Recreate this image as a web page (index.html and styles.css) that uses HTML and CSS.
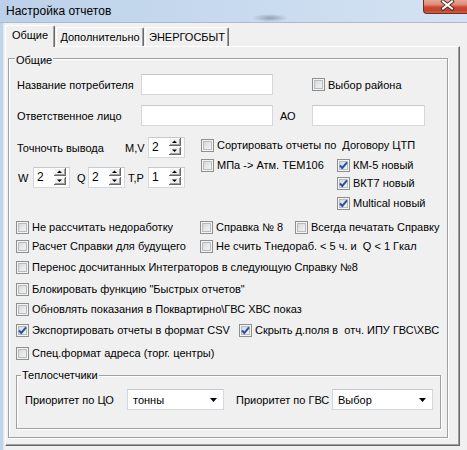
FILE: index.html
```html
<!DOCTYPE html>
<html lang="ru">
<head>
<meta charset="utf-8">
<title>Настройка отчетов</title>
<link rel="stylesheet" href="styles.css">
</head>
<body>
<div class="window">
  <div class="titlebar">
    <span class="title">Настройка отчетов</span>
    <div class="close">
      <svg width="44" height="14" viewBox="0 0 44 14">
        <path d="M20 1.5 L29 8.5 M29 1.5 L20 8.5" stroke="#4a2a24" stroke-width="3.8" stroke-linecap="square" fill="none"/>
        <path d="M20 1.5 L29 8.5 M29 1.5 L20 8.5" stroke="#ffffff" stroke-width="2" stroke-linecap="square" fill="none"/>
      </svg>
    </div>
  </div>
  <div class="frame-row">
    <div class="frame-left"></div>
    <div class="client">
      <div class="tabs">
        <div class="tab tab-active">Общие</div>
        <div class="tab tab-extra">Дополнительно</div>
        <div class="tab tab-energo">ЭНЕРГОСБЫТ</div>
      </div>
      <div class="page">
        <div class="group group-main">
          <span class="legend legend-main">Общие</span>

          <div class="row row-name">
            <span class="lbl lbl-field">Название потребителя</span>
            <span class="edit edit-name"></span>
            <span class="chk chk-district"><span class="cb"></span>Выбор района</span>
          </div>

          <div class="row row-resp">
            <span class="lbl lbl-field">Ответственное лицо</span>
            <span class="edit edit-name"></span>
            <span class="lbl lbl-ao">АО</span>
            <span class="edit edit-ao"></span>
          </div>

          <div class="precision">
            <div class="prec-left">
              <div class="prow">
                <span class="lbl lbl-prec">Точночть вывода</span>
                <span class="lbl lbl-mv">M,V</span>
                <span class="spin"><span class="spin-val">2</span><svg class="spin-btn" width="12" height="17" viewBox="0 0 12 17"><rect width="12" height="8" fill="#696969"/><rect width="11" height="7" fill="#ffffff"/><rect x="1" y="1" width="10" height="6" fill="#a0a0a0"/><rect x="1" y="1" width="9" height="5" fill="#f0f0f0"/><polygon points="3,5 8,5 5.5,2.5" fill="#000"/><rect y="9" width="12" height="8" fill="#696969"/><rect y="9" width="11" height="7" fill="#ffffff"/><rect x="1" y="10" width="10" height="6" fill="#a0a0a0"/><rect x="1" y="10" width="9" height="5" fill="#f0f0f0"/><polygon points="3,11.5 8,11.5 5.5,14" fill="#000"/></svg></span>
              </div>
              <div class="prow prow-2">
                <span class="lbl lbl-w">W</span>
                <span class="spin"><span class="spin-val">2</span><svg class="spin-btn" width="12" height="17" viewBox="0 0 12 17"><rect width="12" height="8" fill="#696969"/><rect width="11" height="7" fill="#ffffff"/><rect x="1" y="1" width="10" height="6" fill="#a0a0a0"/><rect x="1" y="1" width="9" height="5" fill="#f0f0f0"/><polygon points="3,5 8,5 5.5,2.5" fill="#000"/><rect y="9" width="12" height="8" fill="#696969"/><rect y="9" width="11" height="7" fill="#ffffff"/><rect x="1" y="10" width="10" height="6" fill="#a0a0a0"/><rect x="1" y="10" width="9" height="5" fill="#f0f0f0"/><polygon points="3,11.5 8,11.5 5.5,14" fill="#000"/></svg></span>
                <span class="lbl lbl-q">Q</span>
                <span class="spin"><span class="spin-val">2</span><svg class="spin-btn" width="12" height="17" viewBox="0 0 12 17"><rect width="12" height="8" fill="#696969"/><rect width="11" height="7" fill="#ffffff"/><rect x="1" y="1" width="10" height="6" fill="#a0a0a0"/><rect x="1" y="1" width="9" height="5" fill="#f0f0f0"/><polygon points="3,5 8,5 5.5,2.5" fill="#000"/><rect y="9" width="12" height="8" fill="#696969"/><rect y="9" width="11" height="7" fill="#ffffff"/><rect x="1" y="10" width="10" height="6" fill="#a0a0a0"/><rect x="1" y="10" width="9" height="5" fill="#f0f0f0"/><polygon points="3,11.5 8,11.5 5.5,14" fill="#000"/></svg></span>
                <span class="lbl lbl-tp">T,P</span>
                <span class="spin"><span class="spin-val">1</span><svg class="spin-btn" width="12" height="17" viewBox="0 0 12 17"><rect width="12" height="8" fill="#696969"/><rect width="11" height="7" fill="#ffffff"/><rect x="1" y="1" width="10" height="6" fill="#a0a0a0"/><rect x="1" y="1" width="9" height="5" fill="#f0f0f0"/><polygon points="3,5 8,5 5.5,2.5" fill="#000"/><rect y="9" width="12" height="8" fill="#696969"/><rect y="9" width="11" height="7" fill="#ffffff"/><rect x="1" y="10" width="10" height="6" fill="#a0a0a0"/><rect x="1" y="10" width="9" height="5" fill="#f0f0f0"/><polygon points="3,11.5 8,11.5 5.5,14" fill="#000"/></svg></span>
              </div>
            </div>
            <div class="prec-right">
              <div class="crow"><span class="chk"><span class="cb"></span>Сортировать отчеты по  Договору ЦТП</span></div>
              <div class="crow crow-r2">
                <span class="chk w-mpa"><span class="cb"></span>МПа -&gt; Атм. ТЕМ106</span>
                <span class="chk"><span class="cb on"><svg width="11" height="11" viewBox="0 0 11 11"><path d="M2 5.5 L4.3 8 L9 2.3" stroke="#2c4fa8" stroke-width="2" fill="none"/></svg></span>КМ-5 новый</span>
              </div>
              <div class="crow crow-r3 indent"><span class="chk"><span class="cb on"><svg width="11" height="11" viewBox="0 0 11 11"><path d="M2 5.5 L4.3 8 L9 2.3" stroke="#2c4fa8" stroke-width="2" fill="none"/></svg></span>ВКТ7 новый</span></div>
              <div class="crow crow-r4 indent"><span class="chk"><span class="cb on"><svg width="11" height="11" viewBox="0 0 11 11"><path d="M2 5.5 L4.3 8 L9 2.3" stroke="#2c4fa8" stroke-width="2" fill="none"/></svg></span>Multical новый</span></div>
            </div>
          </div>

          <div class="crow opt opt-1">
            <span class="chk w-col1"><span class="cb"></span>Не рассчитать недоработку</span>
            <span class="chk w-spr"><span class="cb"></span>Справка № 8</span>
            <span class="chk"><span class="cb"></span>Всегда печатать Справку</span>
          </div>
          <div class="crow opt opt-2">
            <span class="chk w-col1"><span class="cb"></span>Расчет Справки для будущего</span>
            <span class="chk"><span class="cb"></span>Не счить Тнедораб. &lt; 5 ч. и  Q &lt; 1 Гкал</span>
          </div>
          <div class="crow opt opt-3">
            <span class="chk"><span class="cb"></span>Перенос досчитанных Интеграторов в следующую Справку №8</span>
          </div>
          <div class="crow opt opt-4">
            <span class="chk"><span class="cb"></span>Блокировать функцию "Быстрых отчетов"</span>
          </div>
          <div class="crow opt opt-5">
            <span class="chk"><span class="cb"></span>Обновлять показания в Поквартирно\ГВС ХВС показ</span>
          </div>
          <div class="crow opt opt-6">
            <span class="chk w-csv"><span class="cb on"><svg width="11" height="11" viewBox="0 0 11 11"><path d="M2 5.5 L4.3 8 L9 2.3" stroke="#2c4fa8" stroke-width="2" fill="none"/></svg></span>Экспортировать отчеты в формат CSV</span>
            <span class="chk"><span class="cb on"><svg width="11" height="11" viewBox="0 0 11 11"><path d="M2 5.5 L4.3 8 L9 2.3" stroke="#2c4fa8" stroke-width="2" fill="none"/></svg></span>Скрыть д.поля в  отч. ИПУ ГВС\ХВС</span>
          </div>
          <div class="crow opt opt-7">
            <span class="chk"><span class="cb"></span>Спец.формат адреса (торг. центры)</span>
          </div>

          <div class="group group-teplo">
            <span class="legend legend-teplo">Теплосчетчики</span>
            <div class="row row-prio">
              <span class="lbl lbl-prio1">Приоритет по ЦО</span>
              <span class="combo combo-1"><span class="combo-val">тонны</span><svg class="combo-arrow" width="7" height="4" viewBox="0 0 7 4"><polygon points="0,0 7,0 3.5,4" fill="#000"/></svg></span>
              <span class="lbl lbl-prio2">Приоритет по ГВС</span>
              <span class="combo combo-2"><span class="combo-val">Выбор</span><svg class="combo-arrow" width="7" height="4" viewBox="0 0 7 4"><polygon points="0,0 7,0 3.5,4" fill="#000"/></svg></span>
            </div>
          </div>
        </div>
      </div>
    </div>
  </div>
</div>
</body>
</html>
```

FILE: styles.css
```css
html, body {
  margin: 0;
  padding: 0;
}
body {
  width: 467px;
  height: 450px;
  overflow: hidden;
  background: #f0f0f0;
  font-family: "Liberation Sans", Arial, sans-serif;
  font-size: 11px;
  color: #000;
}

.window {
  display: flex;
  flex-direction: column;
  height: 450px;
}

/* title bar */
.titlebar {
  flex-shrink: 0;
  height: 23px;
  box-sizing: border-box;
  display: flex;
  align-items: flex-start;
  border-bottom: 1px solid #a9bbcf;
  background:
    radial-gradient(ellipse 18px 4px at 270px 18px, rgba(80, 92, 108, 0.45), rgba(80, 92, 108, 0)),
    linear-gradient(90deg, #bcd1e9 0%, #c6d9ee 45%, #d4e3f3 100%);
}
.title {
  margin: 3px 0 0 6px;
  font-size: 12px;
  line-height: 16px;
  color: #000;
}
.close {
  margin-left: auto;
  width: 44px;
  height: 14px;
  box-sizing: border-box;
  border-left: 1px solid #6b2f26;
  border-bottom: 1px solid #6b2f26;
  border-bottom-left-radius: 4px;
  background: linear-gradient(to bottom, #e8a898 0%, #dc8b79 35%, #c84a30 55%, #c5432a 80%, #d4603f 100%);
  overflow: hidden;
}
.close svg {
  display: block;
  margin-left: -1px;
}

/* frame + client */
.frame-row {
  flex: 1;
  display: flex;
}
.frame-left {
  width: 3px;
  background: #c0d5ec;
  border-right: 1px solid #dbe7f4;
}
.client {
  flex: 1;
  padding: 2px 0 0 1px;
}

/* tabs */
.tabs {
  display: flex;
  align-items: flex-end;
  height: 21px;
}
.tab {
  box-sizing: border-box;
  height: 19px;
  display: flex;
  align-items: center;
  justify-content: center;
  background: #f0f0f0;
  border-top: 1px solid #fff;
  border-left: 1px solid #fff;
  border-right: 1px solid #696969;
  box-shadow: inset -1px 0 0 #a0a0a0;
  border-top-left-radius: 2px;
  border-top-right-radius: 2px;
  padding-bottom: 1px;
}
.tab-active {
  width: 50px;
  height: 22px;
  margin-bottom: -1px;
  position: relative;
  z-index: 1;
  padding-bottom: 3px;
}
.tab-extra {
  width: 88px;
  margin-left: 1px;
}
.tab-energo {
  width: 84px;
  margin-left: 1px;
}

.page {
  box-sizing: border-box;
  width: 455px;
  height: 400px;
  border-top: 1px solid #fff;
  border-left: 1px solid #fff;
  border-right: 1px solid #696969;
  border-bottom: 1px solid #696969;
  box-shadow: inset -1px -1px 0 #a0a0a0;
  padding: 11px 0 0 2px;
}

/* group boxes */
.group {
  position: relative;
  box-sizing: border-box;
  border: 1px solid #a0a0a0;
  box-shadow: inset 1px 1px 0 #fff, 1px 1px 0 #fff;
}
.group-main {
  width: 440px;
  height: 380px;
}
.legend {
  position: absolute;
  background: #f0f0f0;
  padding: 0 1px;
  line-height: 13px;
  white-space: nowrap;
}
.legend-main {
  top: -5px;
  left: 6px;
}
.legend-teplo {
  top: -7px;
  left: 4px;
}

/* generic rows */
.row {
  display: flex;
  align-items: center;
  height: 21px;
}
.lbl {
  white-space: pre;
  flex-shrink: 0;
  line-height: 14px;
}
.edit {
  box-sizing: border-box;
  height: 21px;
  flex-shrink: 0;
  background: #fff;
  border: 1px solid #d4d7dd;
  border-top-color: #c3c7ce;
}

.row-name {
  margin-top: 15px;
  padding-left: 8px;
}
.row-resp {
  margin-top: 10px;
  padding-left: 8px;
}
.lbl-field {
  width: 124px;
}
.edit-name {
  width: 132px;
}
.chk-district {
  margin-left: 39px;
}
.lbl-ao {
  width: 32px;
  margin-left: 7px;
}
.edit-ao {
  width: 113px;
}

/* precision block */
.precision {
  display: flex;
  margin-top: 11px;
}
.prec-left {
  width: 184px;
  margin-left: 8px;
}
.prow {
  display: flex;
  align-items: center;
  height: 21px;
}
.prow-2 {
  margin-top: 9px;
}
.lbl-prec {
  width: 108px;
}
.lbl-mv {
  width: 23px;
}
.lbl-w {
  width: 15px;
  padding-left: 1px;
}
.lbl-q {
  width: 11px;
  margin-left: 7px;
}
.lbl-tp {
  width: 20px;
  margin-left: 3px;
}

.spin {
  box-sizing: border-box;
  width: 37px;
  height: 21px;
  flex-shrink: 0;
  display: flex;
  align-items: flex-start;
  background: #fff;
  border: 1px solid #d4d7dd;
  border-top-color: #c3c7ce;
}
.spin-val {
  flex: 1;
  padding-left: 3px;
  line-height: 18px;
  font-size: 12px;
}
.spin-btn {
  display: block;
  margin: 0 3px 0 0;
}

.prec-right {
  display: flex;
  flex-direction: column;
}

/* checkbox rows */
.crow {
  display: flex;
  align-items: center;
  height: 16px;
}
.crow-r2 { margin-top: 4px; }
.crow-r3 { margin-top: 2px; }
.crow-r4 { margin-top: 4px; }
.indent { padding-left: 136px; }
.w-mpa { width: 136px; }

.chk {
  display: flex;
  align-items: center;
  white-space: pre;
  flex-shrink: 0;
  line-height: 14px;
}
.cb {
  box-sizing: border-box;
  width: 13px;
  height: 13px;
  margin-right: 3px;
  flex-shrink: 0;
  border: 1px solid #8e8f8f;
  background: linear-gradient(135deg, #cdd0d3 0%, #e8e9ea 55%, #f7f7f7 100%);
  box-shadow: inset 0 0 0 1px #f4f4f4, inset 0 0 0 2px #b8bbbf;
}
.cb svg {
  display: block;
}

.opt { padding-left: 7px; }
.opt-1 { margin-top: 8px; }
.opt-2 { margin-top: 3px; }
.opt-3 { margin-top: 5px; }
.opt-4 { margin-top: 6px; }
.opt-5 { margin-top: 4px; }
.opt-6 { margin-top: 5px; }
.opt-7 { margin-top: 7px; }
.w-col1 { width: 184px; }
.w-spr { width: 95px; }
.w-csv { width: 223px; }

/* heat meters group */
.group-teplo {
  margin: 14px 0 0 7px;
  width: 425px;
  height: 54px;
}
.row-prio {
  margin-top: 13px;
  padding-left: 8px;
}
.lbl-prio1 {
  width: 102px;
}
.lbl-prio2 {
  width: 96px;
  margin-left: 12px;
}
.combo {
  box-sizing: border-box;
  height: 21px;
  flex-shrink: 0;
  display: flex;
  align-items: center;
  background: #fff;
  border: 1px solid #d4d7dd;
  border-top-color: #c3c7ce;
}
.combo-1 { width: 97px; }
.combo-2 { width: 101px; }
.combo-val {
  flex: 1;
  padding-left: 5px;
  line-height: 14px;
}
.combo-arrow {
  display: block;
  margin-right: 6px;
}
```
